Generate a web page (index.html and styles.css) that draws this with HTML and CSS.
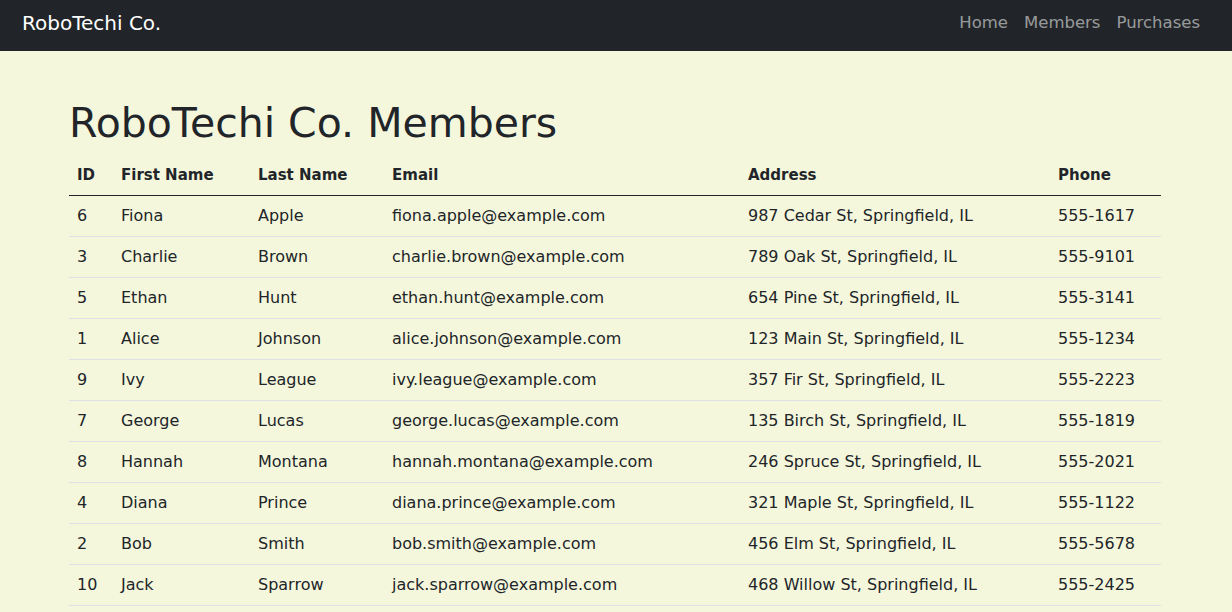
FILE: index.html
```html
<!DOCTYPE html>
<html lang="en">
<head>
<meta charset="utf-8">
<title>RoboTechi Co. Members</title>
<link rel="stylesheet" href="styles.css">
</head>
<body>
<nav class="navbar">
  <a class="brand" href="#">RoboTechi Co.</a>
  <ul class="nav">
    <li><a href="#">Home</a></li>
    <li><a href="#">Members</a></li>
    <li><a href="#">Purchases</a></li>
  </ul>
</nav>
<main class="container">
  <h1 class="title">RoboTechi Co. Members</h1>
  <table class="table">
    <colgroup>
      <col class="c-id"><col class="c-first"><col class="c-last"><col class="c-email"><col class="c-addr"><col class="c-phone">
    </colgroup>
    <thead>
      <tr><th>ID</th><th>First Name</th><th>Last Name</th><th>Email</th><th>Address</th><th>Phone</th></tr>
    </thead>
    <tbody>
      <tr><td>6</td><td>Fiona</td><td>Apple</td><td>fiona.apple@example.com</td><td>987 Cedar St, Springfield, IL</td><td>555-1617</td></tr>
      <tr><td>3</td><td>Charlie</td><td>Brown</td><td>charlie.brown@example.com</td><td>789 Oak St, Springfield, IL</td><td>555-9101</td></tr>
      <tr><td>5</td><td>Ethan</td><td>Hunt</td><td>ethan.hunt@example.com</td><td>654 Pine St, Springfield, IL</td><td>555-3141</td></tr>
      <tr><td>1</td><td>Alice</td><td>Johnson</td><td>alice.johnson@example.com</td><td>123 Main St, Springfield, IL</td><td>555-1234</td></tr>
      <tr><td>9</td><td>Ivy</td><td>League</td><td>ivy.league@example.com</td><td>357 Fir St, Springfield, IL</td><td>555-2223</td></tr>
      <tr><td>7</td><td>George</td><td>Lucas</td><td>george.lucas@example.com</td><td>135 Birch St, Springfield, IL</td><td>555-1819</td></tr>
      <tr><td>8</td><td>Hannah</td><td>Montana</td><td>hannah.montana@example.com</td><td>246 Spruce St, Springfield, IL</td><td>555-2021</td></tr>
      <tr><td>4</td><td>Diana</td><td>Prince</td><td>diana.prince@example.com</td><td>321 Maple St, Springfield, IL</td><td>555-1122</td></tr>
      <tr><td>2</td><td>Bob</td><td>Smith</td><td>bob.smith@example.com</td><td>456 Elm St, Springfield, IL</td><td>555-5678</td></tr>
      <tr><td>10</td><td>Jack</td><td>Sparrow</td><td>jack.sparrow@example.com</td><td>468 Willow St, Springfield, IL</td><td>555-2425</td></tr>
    </tbody>
  </table>
</main>
</body>
</html>
```
FILE: styles.css
```css
* { box-sizing: border-box; }
html, body { margin: 0; padding: 0; }
body {
  background: #f5f7dc;
  color: #212529;
  font-family: "DejaVu Sans", "Open Sans", sans-serif;
  font-size: 16px;
  line-height: 24px;
}
.navbar {
  background: #212529;
  height: 51px;
  display: flex;
  align-items: center;
  justify-content: space-between;
  padding: 0 24px 6px 22px;
}
.brand {
  color: #fff;
  text-decoration: none;
  font-size: 20px;
  line-height: 30px;
}
.nav {
  list-style: none;
  margin: 0;
  padding: 0;
  display: flex;
}
.nav a {
  display: block;
  color: rgba(255,255,255,0.55);
  text-decoration: none;
  padding: 8px 8px;
  font-size: 16.5px;
}
.container {
  width: 1092px;
  margin: 0 71px 0 69px;
  padding-top: 48px;
}
.title {
  margin: 0 0 8px 0;
  font-size: 41px;
  font-weight: 500;
  line-height: 48px;
}
.table {
  width: 100%;
  border-collapse: collapse;
  table-layout: fixed;
}
.c-id { width: 44px; }
.c-first { width: 137px; }
.c-last { width: 134px; }
.c-email { width: 356px; }
.c-addr { width: 310px; }
.c-phone { width: 111px; }
.table th, .table td {
  padding: 8px;
  text-align: left;
  border-bottom: 1px solid #dee2e6;
  white-space: nowrap;
}
.table th {
  font-size: 15px;
  font-weight: 700;
  border-bottom: 1px solid #212529;
}
```
